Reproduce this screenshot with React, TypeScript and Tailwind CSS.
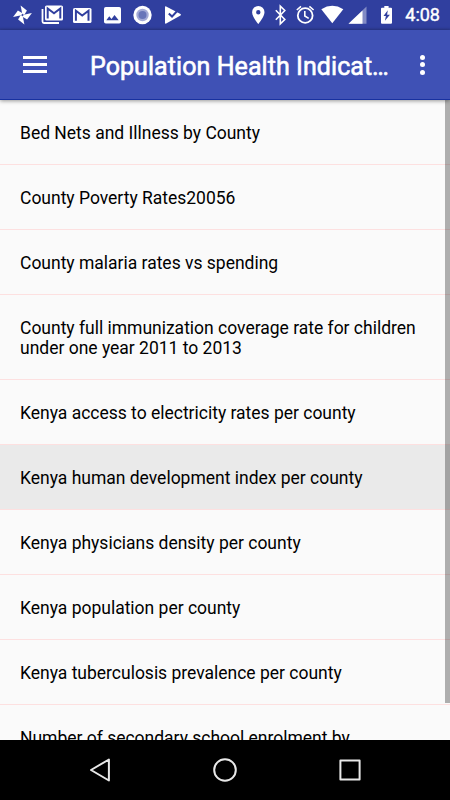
import type { ReactNode } from 'react';

interface Indicator {
  title: string;
  pressed?: boolean;
}

const indicators: Indicator[] = [
  { title: 'Bed Nets and Illness by County' },
  { title: 'County Poverty Rates20056' },
  { title: 'County malaria rates vs spending' },
  { title: 'County full immunization coverage rate for children under one year 2011 to 2013' },
  { title: 'Kenya access to electricity rates per county' },
  { title: 'Kenya human development index per county', pressed: true },
  { title: 'Kenya physicians density per county' },
  { title: 'Kenya population per county' },
  { title: 'Kenya tuberculosis prevalence per county' },
  { title: 'Number of secondary school enrolment by' },
];

function StatusIcon({ children, width = 30 }: { children: ReactNode; width?: number }) {
  return (
    <svg width={width} height={30} viewBox={`0 0 ${width} 30`} fill="#fff" className="shrink-0">
      {children}
    </svg>
  );
}

function StatusBar() {
  return (
    <div className="flex h-[30px] shrink-0 items-center bg-[#303f9f] bg-linear-to-b from-[#303f9f] from-90% to-[#2b398f]">
      <div className="flex pl-2">
        <StatusIcon>
          {[0, 90, 180, 270].map((angle) => (
            <path key={angle} d="M14.5 15 12.6 5.6 18.9 10.4 16.6 14.6z" transform={`rotate(${angle} 14.5 15)`} />
          ))}
          <circle cx="14.5" cy="15" r="1" fill="#303f9f" />
        </StatusIcon>
        <StatusIcon>
          <path d="M4.5 9v12.5q0 1.5 1.5 1.5h15" fill="none" stroke="#fff" strokeWidth="1.8" />
          <rect x="7" y="5.5" width="18" height="15" rx="1.6" />
          <path d="M9.7 18.6V8.4l6.3 4.8 6.3-4.8v10.2" fill="none" stroke="#303f9f" strokeWidth="2" />
        </StatusIcon>
        <StatusIcon>
          <rect x="5" y="8" width="18.5" height="15" rx="1.6" />
          <path d="M7.9 20.8V10.8l6.3 4.8 6.3-4.8v10" fill="none" stroke="#303f9f" strokeWidth="2" />
        </StatusIcon>
        <StatusIcon>
          <rect x="6" y="7" width="17" height="16.5" rx="1.8" />
          <path d="M8.3 20.2 11.3 16.2 13.5 18.9 16.5 14.9 20.7 20.2z" fill="#303f9f" />
        </StatusIcon>
        <StatusIcon>
          <circle cx="14.5" cy="15" r="9.2" />
          <circle cx="14.5" cy="15" r="6.2" fill="#a3aad6" />
          <circle cx="14.5" cy="15" r="4" fill="#6875b9" />
        </StatusIcon>
        <StatusIcon>
          <path d="M7 7.2q0-1.2 1.2-.7L22.5 14q1 .8 0 1.6L8.2 23.6Q7 24 7 22.9z" />
          <path d="m10.8 13.6 3.2 3 7-7.6" fill="none" stroke="#303f9f" strokeWidth="2.1" />
        </StatusIcon>
      </div>

      <div className="ml-auto flex items-center pr-[10px]">
        <StatusIcon width={24}>
          <path
            fillRule="evenodd"
            d="M12.3 6a6.2 6.2 0 0 0-6.2 6.3C6.1 17 12.3 24 12.3 24s6.2-7 6.2-11.7A6.2 6.2 0 0 0 12.3 6m0 4a2.2 2.2 0 1 1 0 4.4 2.2 2.2 0 0 1 0-4.4"
          />
        </StatusIcon>
        <StatusIcon width={24}>
          <path d="m5.8 10.3 9 9.2-4.5 4.3V6.2l4.5 4.3-9 9.2" fill="none" stroke="#fff" strokeWidth="1.6" />
        </StatusIcon>
        <StatusIcon width={27}>
          <circle cx="11.2" cy="15.5" r="7.4" fill="none" stroke="#fff" strokeWidth="1.8" />
          <path d="M2.8 10 7 6.3M19.6 10l-4.2-3.7M10.8 11v5l3.9 2.4" fill="none" stroke="#fff" strokeWidth="1.6" />
        </StatusIcon>
        <StatusIcon width={27}>
          <path d="M0.3 9.2Q11.3 2.5 22.3 9.2L11.3 23.2z" />
        </StatusIcon>
        <StatusIcon width={29}>
          <path d="M18.5 6.5v17.3H.5z" opacity=".4" />
          <path d="M14.5 10.4v13.4H.5z" />
        </StatusIcon>
        <StatusIcon width={28}>
          <path
            fillRule="evenodd"
            d="M5 7.8h2.3V6h4.3v1.8H14q1 0 1 1v14q0 1-1 1H5q-1 0-1-1v-14q0-1 1-1m5.8 2.4L6.5 16h2.4l-1 4.8 5-6.1h-2.8z"
          />
        </StatusIcon>
        <span className="text-[18px] leading-[30px] text-white [-webkit-text-stroke:0.4px_white]">4:08</span>
      </div>
    </div>
  );
}

function AppBar() {
  return (
    <header className="z-10 flex h-[70px] shrink-0 items-center border-b border-[#1831a0] bg-[#3f51b5] shadow-[0_1px_4px_rgba(0,0,0,0.4)]">
      <button aria-label="Open menu" className="ml-[23px] flex w-6 flex-col gap-1">
        <span className="h-[3px] bg-white" />
        <span className="h-[3px] bg-white" />
        <span className="h-[3px] bg-white" />
      </button>
      <h1 className="ml-[43px] w-[302px] truncate pt-[5px] text-[25px] leading-8 tracking-[0.07px] text-white [-webkit-text-stroke:0.6px_white]">
        Population Health Indicators
      </h1>
      <button aria-label="More options" className="mr-[25px] ml-auto flex flex-col gap-[2.5px]">
        <span className="size-[5px] rounded-full bg-white" />
        <span className="size-[5px] rounded-full bg-white" />
        <span className="size-[5px] rounded-full bg-white" />
      </button>
    </header>
  );
}

function NavBar() {
  return (
    <nav className="flex h-[60px] shrink-0 items-center justify-center gap-[95px] bg-black">
      <svg width="30" height="30" viewBox="0 0 30 30" fill="none" stroke="#e8e8e8" strokeWidth="2" strokeLinejoin="round">
        <path d="M23.9 4.5v21L6 15z" />
      </svg>
      <svg width="30" height="30" viewBox="0 0 30 30" fill="none" stroke="#e8e8e8" strokeWidth="2">
        <circle cx="15" cy="15" r="10.8" />
      </svg>
      <svg width="30" height="30" viewBox="0 0 30 30" fill="none" stroke="#e8e8e8" strokeWidth="2" strokeLinejoin="round">
        <rect x="5.4" y="5.4" width="19.2" height="19.2" />
      </svg>
    </nav>
  );
}

export default function App() {
  return (
    <div className="flex h-[800px] w-[450px] flex-col overflow-hidden bg-[#fafafa] font-[Roboto,sans-serif]">
      <StatusBar />
      <AppBar />
      <main className="relative min-h-0 flex-1 overflow-hidden">
        <ul>
          {indicators.map((item) => (
            <li
              key={item.title}
              className={`border-b border-[#fde0e0] px-5 pt-[23px] pb-[21px] text-[17.5px] leading-5 tracking-[-0.01px] text-black ${
                item.pressed ? 'bg-[#eaeaea]' : ''
              }`}
            >
              {item.title}
            </li>
          ))}
        </ul>
        {/* scroll thumb */}
        <div className="absolute top-0 right-0 h-[603px] w-[5px] bg-black/30" />
      </main>
      <NavBar />
    </div>
  );
}
